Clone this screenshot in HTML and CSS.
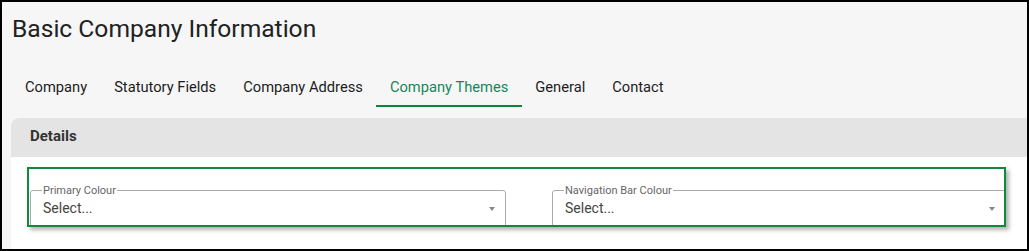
FILE: index.html
```html
<!DOCTYPE html>
<html lang="en">

<head>
    <meta charset="UTF-8">
    <link rel="stylesheet" href="styles.css">
    <title>Basic Company Information</title>
</head>

<body>
    <div class="frame">
        <h1 class="title">Basic Company Information</h1>

        <!-- tabs -->
        <nav class="tabs">
            <div class="tab">Company</div>
            <div class="tab">Statutory Fields</div>
            <div class="tab">Company Address</div>
            <div class="tab active">Company Themes</div>
            <div class="tab">General</div>
            <div class="tab">Contact</div>
        </nav>

        <section class="panel">
            <div class="panel-head">Details</div>
            <div class="panel-body">
                <div class="highlight">
                    <fieldset class="field">
                        <legend>Primary Colour</legend>
                        <div class="select">
                            <span>Select...</span>
                            <span class="arrow"></span>
                        </div>
                    </fieldset>
                    <fieldset class="field">
                        <legend>Navigation Bar Colour</legend>
                        <div class="select">
                            <span>Select...</span>
                            <span class="arrow"></span>
                        </div>
                    </fieldset>
                </div>
            </div>
        </section>
    </div>
</body>

</html>
```

FILE: styles.css
```css
* {
    font-family: 'Roboto', sans-serif;
    box-sizing: border-box;
}

body {
    margin: 0;
}

.frame {
    width: 1029px;
    height: 251px;
    border: 2px solid #000;
    background-color: #f6f6f6;
    overflow: hidden;
}

.title {
    margin: 0;
    padding: 13px 0 0 10px;
    font-size: 24.6px;
    line-height: 28px;
    font-weight: 400;
    color: #212121;
}

.tabs {
    display: flex;
    margin-top: 34px;
    padding-left: 9.5px;
}

.tab {
    padding: 0 13.5px 8px;
    font-size: 14.7px;
    line-height: 20px;
    font-weight: 400;
    color: #1c1c1c;
    border-bottom: 2px solid transparent;
}

.tab.active {
    color: #17875b;
    border-bottom-color: #0b873c;
}

.panel {
    margin: 11px 0 0 9px;
    border-radius: 8px 0 0 0;
    background-color: white;
    overflow: hidden;
}

.panel-head {
    height: 39px;
    padding: 8px 0 0 19px;
    background-color: #e4e4e4;
    font-size: 15px;
    line-height: 20px;
    font-weight: 700;
    color: #333;
}

.panel-body {
    padding: 10px 21px 30px 16px;
}

.highlight {
    display: grid;
    grid-template-columns: 476px 454px;
    column-gap: 46px;
    height: 60px;
    padding: 15px 0 0 1px;
    border: 2px solid #11883d;
    box-shadow: 3px 3px 4px rgba(0, 0, 0, 0.3);
    overflow: hidden;
}

.field {
    margin: 0;
    min-width: 0;
    height: 60px;
    padding: 0 10px 0 12px;
    border: 1px solid #aaa;
    border-radius: 3px;
}

.field legend {
    margin-left: -1px;
    padding: 0 1px;
    font-size: 11px;
    line-height: 13px;
    color: #666;
}

.select {
    display: flex;
    justify-content: space-between;
    align-items: center;
    margin-top: 1px;
    font-size: 14px;
    line-height: 20px;
    color: #444;
}

.arrow {
    width: 0;
    height: 0;
    border-left: 3px solid transparent;
    border-right: 3px solid transparent;
    border-top: 4px solid #888;
    margin-top: 1px;
}
```
